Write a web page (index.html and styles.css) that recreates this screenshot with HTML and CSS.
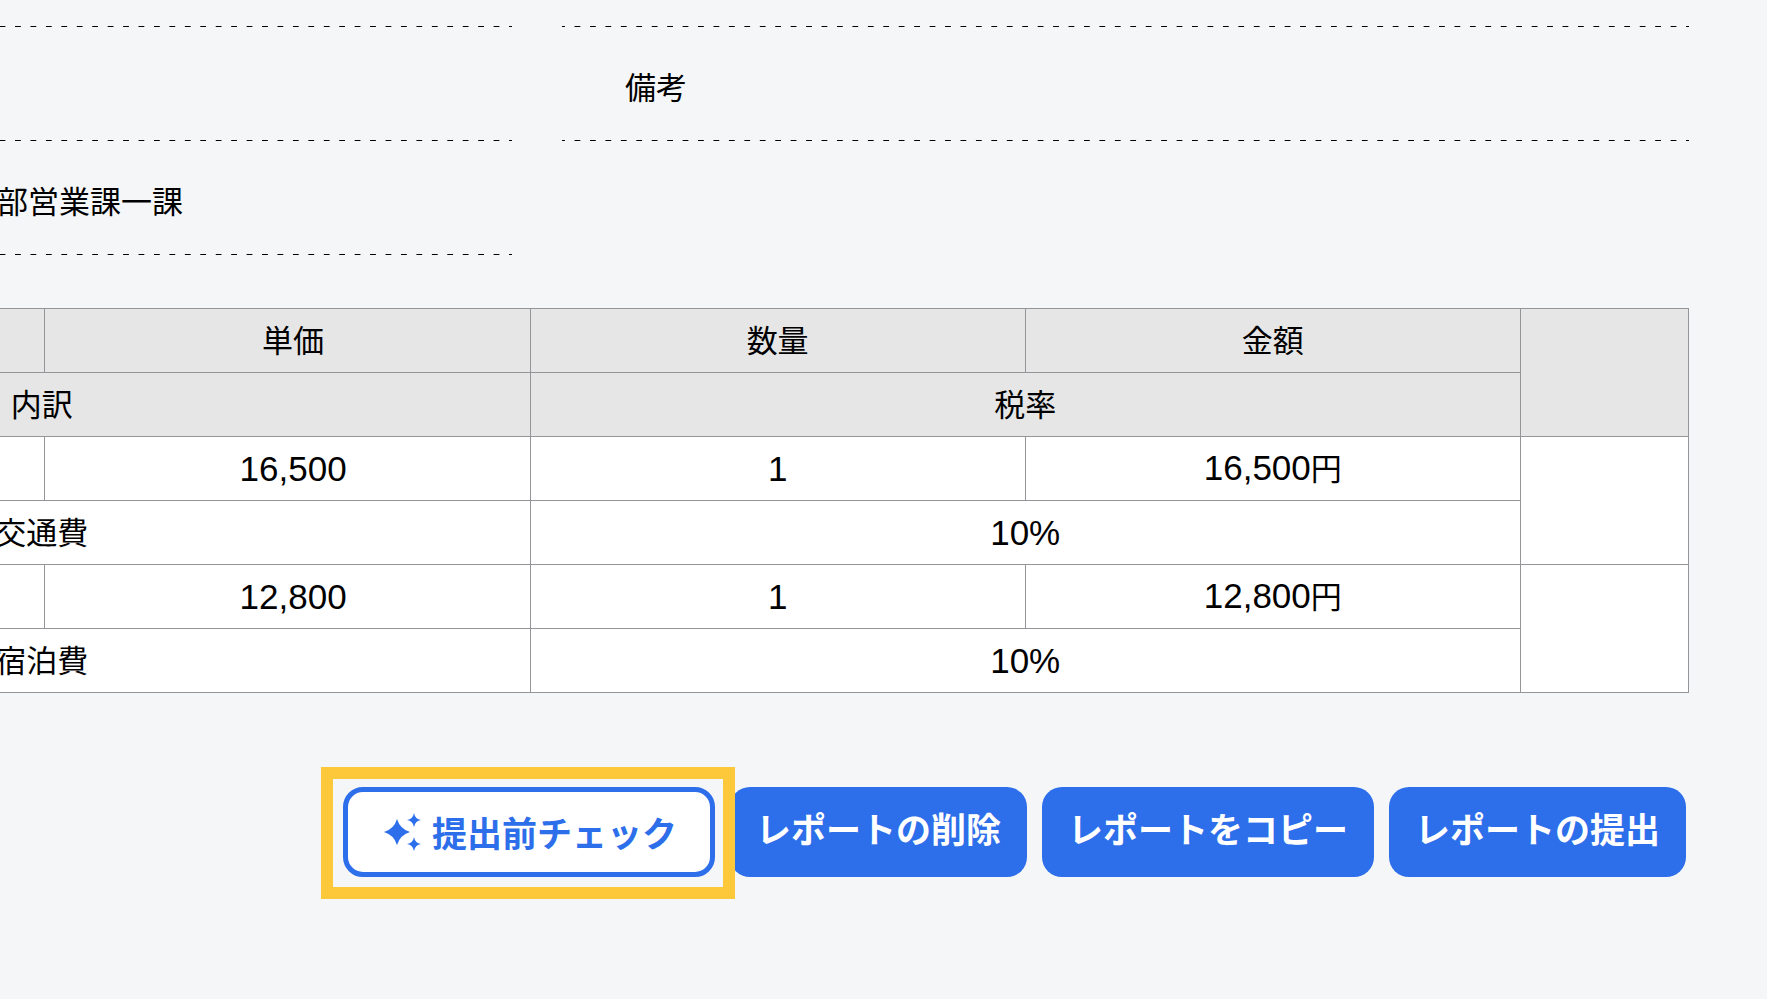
FILE: index.html
```
<!DOCTYPE html>
<html lang="ja">
<head>
	<meta charset="utf-8">
	<title>レポート</title>
	<link rel="stylesheet" href="styles.css">
</head>
<body>
	<main class="report">
		<div class="info">
			<div class="info-col">
				<div class="info-row info-first"></div>
				<div class="info-row"></div>
				<div class="info-row"><span class="info-value">部営業課一課</span></div>
			</div>
			<div class="info-col">
				<div class="info-row info-first"></div>
				<div class="info-row"><span class="info-label">備考</span></div>
			</div>
		</div>

		<table class="detail">
			<colgroup>
				<col class="col-side">
				<col class="col-item">
				<col class="col-price">
				<col class="col-num">
				<col class="col-num">
				<col class="col-side">
			</colgroup>
			<thead>
				<tr>
					<th rowspan="2"></th>
					<th></th>
					<th class="price">単価</th>
					<th>数量</th>
					<th>金額</th>
					<th rowspan="2"></th>
				</tr>
				<tr>
					<th colspan="2">内訳</th>
					<th colspan="2">税率</th>
				</tr>
			</thead>
			<tbody>
				<tr>
					<td rowspan="2"></td>
					<td></td>
					<td class="num price">16,500</td>
					<td class="num">1</td>
					<td class="num">16,500<span class="yen">円</span></td>
					<td rowspan="2"></td>
				</tr>
				<tr>
					<td colspan="2">交通費</td>
					<td colspan="2" class="num">10%</td>
				</tr>
				<tr>
					<td rowspan="2"></td>
					<td></td>
					<td class="num price">12,800</td>
					<td class="num">1</td>
					<td class="num">12,800<span class="yen">円</span></td>
					<td rowspan="2"></td>
				</tr>
				<tr>
					<td colspan="2">宿泊費</td>
					<td colspan="2" class="num">10%</td>
				</tr>
			</tbody>
		</table>

		<div class="actions">
			<div class="highlight">
				<button type="button" class="btn btn-check">
					<svg class="sparkle" viewBox="0 0 38 40" aria-hidden="true">
						<path d="M14 7Q17 17 27 20Q17 23 14 33Q11 23 1 20Q11 17 14 7Z"/>
						<path d="M31 1Q32 7 38 8Q32 9 31 15Q30 9 24 8Q30 7 31 1Z"/>
						<path d="M31 25Q32 31 38 32Q32 33 31 39Q30 33 24 32Q30 31 31 25Z"/>
					</svg>
					提出前チェック
				</button>
			</div>
			<button type="button" class="btn">レポートの削除</button>
			<button type="button" class="btn">レポートをコピー</button>
			<button type="button" class="btn">レポートの提出</button>
		</div>
	</main>
</body>
</html>
```
FILE: styles.css
```
* {
	box-sizing: border-box;
}

body {
	margin: 0;
	min-height: 100vh;
	background-color: #f5f6f8;
	color: #000;
	font-family: "Noto Sans CJK JP", sans-serif;
	font-size: 31px;
	line-height: 46px;
	overflow-x: hidden;
}

/* the sheet is wider than the window and is scrolled to its right side */
.report {
	margin-left: -615px;
	margin-right: 78px;
	padding-bottom: 60px;
}

.info {
	display: grid;
	grid-template-columns: 1fr 1fr;
	column-gap: 50px;
}

.info-row {
	min-height: 114px;
	padding: 36px 0 32px;
	background-image: linear-gradient(to right, #000 3px, transparent 3px, transparent calc(100% - 3px), #000 calc(100% - 3px));
	background-size: calc(100% / 73) 1px;
	background-position: left bottom;
	background-repeat: repeat-x;
}

.info-first {
	min-height: 27px;
	padding: 0;
}

.info-label {
	margin-left: 63px;
}

.info-value {
	margin-left: 612px;
}

.detail {
	width: 100%;
	margin-top: 53px;
	border-collapse: collapse;
	table-layout: fixed;
	background-color: #fff;
}

.detail th,
.detail td {
	height: 64px;
	padding: 0 0 4px;
	border: 1px solid #939598;
	font-weight: normal;
	text-align: center;
}

.detail .num {
	padding-bottom: 0;
	font-family: "Liberation Sans", "Noto Sans CJK JP", sans-serif;
	font-size: 35px;
}

.detail .price {
	padding-left: 12px;
}

.detail th {
	background-color: #e6e6e6;
}

.yen {
	font-size: 31px;
}

.col-side {
	width: 7.3%;
}

.col-item {
	width: 21.3%;
}

.col-price {
	width: 21.1%;
}

.col-num {
	width: 21.5%;
}

.actions {
	display: flex;
	justify-content: flex-end;
	gap: 15px;
	margin-top: 94px;
	padding-right: 3px;
}

.btn {
	height: 90px;
	padding: 0 26px 8px;
	border: 0;
	border-radius: 20px;
	background-color: #2d6eea;
	color: #fff;
	font-family: inherit;
	font-size: 35px;
	font-weight: bold;
	line-height: 52px;
	white-space: nowrap;
}

.btn-check {
	display: flex;
	align-items: center;
	gap: 11px;
	padding: 0 33px 0 35px;
	border: 5px solid #2d6eea;
	background-color: #fff;
	color: #2d6eea;
}

.sparkle {
	width: 38px;
	height: 40px;
	fill: currentColor;
}

.highlight {
	position: relative;
}

.highlight::after {
	content: "";
	position: absolute;
	inset: -20px -20px -22px -22px;
	border: 12px solid #fdc93a;
	pointer-events: none;
}
```
